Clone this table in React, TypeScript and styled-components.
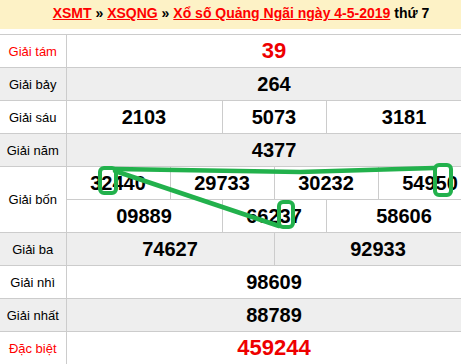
import React from 'react';
import styled, { createGlobalStyle } from 'styled-components';

const GlobalStyle = createGlobalStyle`
  html, body {
    margin: 0;
    padding: 0;
    overflow: hidden;
    background: #FFFFFF;
    font-family: "Liberation Sans", Arial, sans-serif;
  }
`;

const Page = styled.div`
  position: relative;
  width: 482px;
`;

const Heading = styled.div`
  height: 29px;
  line-height: 26px;
  background: #FDF2C6;
  text-align: center;
  font-size: 14px;
  font-weight: 700;
  color: #000000;
  margin-bottom: 5px;
`;

const Crumb = styled.a`
  color: #FF0000;
  text-decoration: underline;
`;

const Sheet = styled.table`
  width: 482px;
  border-collapse: collapse;
  table-layout: fixed;
`;

const Row = styled.tr<{ $alt?: boolean }>`
  background: ${(p) => (p.$alt ? '#EEEEEE' : '#FFFFFF')};
`;

const Label = styled.td<{ $red?: boolean; $last?: boolean }>`
  height: 32px;
  padding: 0;
  border-top: 1px solid #CCCCCC;
  border-right: 1px solid #CCCCCC;
  border-bottom: 1px solid ${(p) => (p.$last ? '#F0A04B' : '#CCCCCC')};
  text-align: center;
  font-size: 13px;
  color: ${(p) => (p.$red ? '#FF0000' : '#000000')};
`;

const Num = styled.td<{ $red?: boolean; $last?: boolean }>`
  height: 32px;
  padding: 0;
  border: 1px solid #CCCCCC;
  border-bottom-color: ${(p) => (p.$last ? '#F0A04B' : '#CCCCCC')};
  text-align: center;
  font-size: ${(p) => (p.$red ? '22px' : '20px')};
  font-weight: 700;
  color: ${(p) => (p.$red ? '#EE0000' : '#000000')};
`;

const Marks = styled.svg`
  position: absolute;
  left: 0;
  top: 0;
  pointer-events: none;
`;

type Cell = [string, number];
type Prize = { name: string; rows: Cell[][]; red?: boolean };

const prizes: Prize[] = [
  { name: 'Giải tám', red: true, rows: [[['39', 8]]] },
  { name: 'Giải bảy', rows: [[['264', 8]]] },
  { name: 'Giải sáu', rows: [[['2103', 3], ['5073', 2], ['3181', 3]]] },
  { name: 'Giải năm', rows: [[['4377', 8]]] },
  {
    name: 'Giải bốn',
    rows: [
      [['32440', 2], ['29733', 2], ['30232', 2], ['54950', 2]],
      [['09889', 3], ['66237', 2], ['58606', 3]],
    ],
  },
  { name: 'Giải ba', rows: [[['74627', 4], ['92933', 4]]] },
  { name: 'Giải nhì', rows: [[['98609', 8]]] },
  { name: 'Giải nhất', rows: [[['88789', 8]]] },
  { name: 'Đặc biệt', red: true, rows: [[['459244', 8]]] },
];

const GREEN = '#22B14C';

// hand-drawn marks around the digits
const boxes = [
  { x: 100, y: 168, w: 16, h: 25 },
  { x: 435, y: 165, w: 16, h: 30 },
  { x: 279, y: 202, w: 14, h: 25 },
];

const App: React.FC = () => {
  return (
    <>
      <GlobalStyle />
      <Page>
        <Heading>
          <Crumb href="#">XSMT</Crumb> » <Crumb href="#">XSQNG</Crumb> »{' '}
          <Crumb href="#">Xổ số Quảng Ngãi ngày 4-5-2019</Crumb> thứ 7
        </Heading>
        <Sheet>
          <colgroup>
            <col style={{ width: 66 }} />
            {Array.from({ length: 8 }).map((_, i) => (
              <col key={i} style={{ width: 52 }} />
            ))}
          </colgroup>
          <tbody>
            {prizes.map((prize, pi) =>
              prize.rows.map((cells, ri) => {
                const last = pi === prizes.length - 1;
                return (
                  <Row key={`${pi}-${ri}`} $alt={pi % 2 === 1}>
                    {ri === 0 && (
                      <Label rowSpan={prize.rows.length} $red={prize.red} $last={last}>
                        {prize.name}
                      </Label>
                    )}
                    {cells.map(([value, span], ci) => (
                      <Num key={ci} colSpan={span} $red={prize.red} $last={last}>
                        {value}
                      </Num>
                    ))}
                  </Row>
                );
              })
            )}
          </tbody>
        </Sheet>
        <Marks width={461} height={364} viewBox="0 0 461 364">
          <path
            d="M115 169 L300 172 L434 168"
            fill="none"
            stroke={GREEN}
            strokeWidth={4.5}
            strokeLinecap="round"
          />
          <path
            d="M115 171 L279 226"
            fill="none"
            stroke={GREEN}
            strokeWidth={4.5}
            strokeLinecap="round"
          />
          {boxes.map((b, i) => (
            <rect
              key={i}
              x={b.x}
              y={b.y}
              width={b.w}
              height={b.h}
              rx={4}
              fill="none"
              stroke={GREEN}
              strokeWidth={4}
            />
          ))}
        </Marks>
      </Page>
    </>
  );
};

export default App;
